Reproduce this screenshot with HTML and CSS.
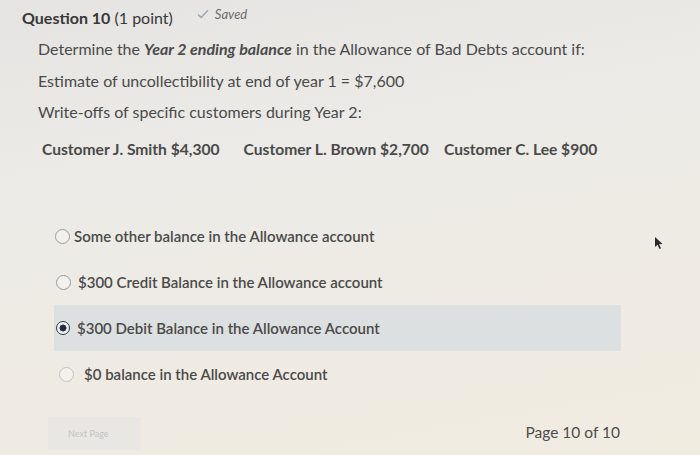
FILE: index.html
```html
<!DOCTYPE html>
<html>
<head>
<meta charset="utf-8">
<link rel="stylesheet" href="styles.css">
</head>
<body>
<div class="page">
  <div class="qhead">
    <span class="qtitle"><b>Question 10</b> (1 point)</span>
    <span class="saved"><svg class="check" width="12" height="10" viewBox="0 0 12 10"><path d="M1 5.5 L4.2 8.5 L11 1.2" fill="none" stroke="#9aa3ad" stroke-width="1.3"/></svg><i>Saved</i></span>
  </div>
  <div class="body">
    <p class="l1">Determine the <b><i>Year 2 ending balance</i></b> in the Allowance of Bad Debts account if:</p>
    <p class="l2">Estimate of uncollectibility at end of year 1 = $7,600</p>
    <p class="l3">Write-offs of specific customers during Year 2:</p>
    <p class="l4"><b>Customer J. Smith $4,300</b><b class="c2">Customer L. Brown $2,700</b><b class="c3">Customer C. Lee $900</b></p>
  </div>
  <div class="options">
    <div class="opt o1"><span class="radio"></span>Some other balance in the Allowance account</div>
    <div class="opt o2"><span class="radio"></span>$300 Credit Balance in the Allowance account</div>
    <div class="opt o3 sel"><span class="radio on"></span>$300 Debit Balance in the Allowance Account</div>
    <div class="opt o4"><span class="radio faint"></span>$0 balance in the Allowance Account</div>
  </div>
  <div class="foot">
    <span class="next">Next Page</span>
    <span class="pageno">Page 10 of 10</span>
  </div>
  <svg class="cursor" width="10" height="14" viewBox="0 0 10 14"><path d="M1 1 L1 11 L3.5 8.8 L5.5 13 L7 12.3 L5 8.2 L8.5 8 Z" fill="#2a2a2a"/></svg>
</div>
</body>
</html>
```
FILE: styles.css
```css
html, body {
  margin: 0;
  padding: 0;
}
body {
  width: 700px;
  height: 455px;
  overflow: hidden;
  font-family: Lato, "Open Sans", sans-serif;
  color: #4a4a4a;
  background: linear-gradient(170deg, #e5e4e2 0%, #ecebe7 35%, #efebe3 70%, #f1ece0 100%);
}
.page {
  position: relative;
  height: 455px;
}
.qhead {
  display: flex;
  align-items: baseline;
  padding: 8px 0 0 22px;
  height: 25px;
}
.qtitle {
  font-size: 16px;
  color: #383838;
}
.saved {
  margin-left: 24px;
  font-size: 13px;
  color: #6c6c6c;
  display: flex;
  align-items: center;
  gap: 6px;
  position: relative;
  top: -5px;
}
.check {
  display: block;
}
.body {
  padding-left: 38px;
  font-size: 16px;
}
.body p {
  margin: 0;
  line-height: 20px;
}
.l1 { margin-top: 6px !important; }
.l2 { margin-top: 12px !important; }
.l3 { margin-top: 11px !important; }
.l4 {
  margin-top: 17px !important;
  padding-left: 4px;
  display: flex;
  font-size: 15.6px;
}
.l4 b { font-weight: 700; }
.l4 .c2 { margin-left: 24px; }
.l4 .c3 { margin-left: 15px; }
.options {
  margin-top: 54px;
  padding-left: 55px;
  width: 566px;
}
.opt {
  display: flex;
  align-items: center;
  height: 46px;
  font-size: 15px;
  color: #4a4a4a;
  font-weight: 600;
}
.radio {
  width: 13px;
  height: 13px;
  border: 1px solid #9a9a9a;
  border-radius: 50%;
  background: #f2f1ee;
  margin-right: 4px;
  box-sizing: content-box;
  flex: none;
}
.radio.faint {
  border-color: #c2c2c0;
}
.radio.on {
  border: 1.5px solid #2f3a48;
  width: 12px;
  height: 12px;
  background: radial-gradient(circle, #243041 0 3.2px, #f2f1ee 3.8px);
}
.o2 { padding-left: 1px; }
.o3 { padding-left: 2px; }
.o4 { padding-left: 4px; }
.o2 .radio { margin-right: 7px; }
.o3 .radio { margin-right: 7px; }
.o4 .radio { margin-right: 10px; }
.sel {
  background: #dde0e0;
  margin-left: -1px;
}
.foot {
  display: flex;
  align-items: center;
  justify-content: space-between;
  margin-top: 20px;
  padding: 0 80px 0 48px;
}
.next {
  width: 93px;
  height: 33px;
  background: #e9e7e3;
  color: #c4c4c2;
  font-size: 9px;
  display: flex;
  align-items: center;
  padding-left: 20px;
  box-sizing: border-box;
}
.pageno {
  font-size: 15.5px;
  color: #4c4c4c;
  position: relative;
  top: -2px;
}
.cursor {
  position: absolute;
  left: 654px;
  top: 236px;
}
```
